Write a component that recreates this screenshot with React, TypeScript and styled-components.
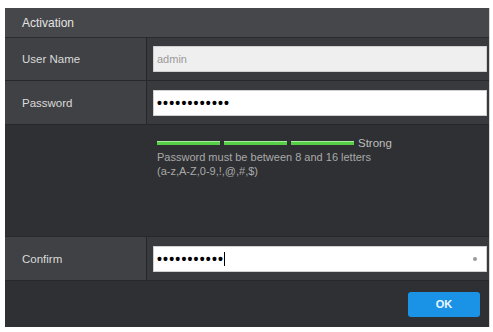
import React from "react";
import styled, { createGlobalStyle } from "styled-components";

const Global = createGlobalStyle`
  html, body { margin: 0; padding: 0; background: #ffffff; }
  body { font-family: "Liberation Sans", Arial, sans-serif; }
`;

const Dialog = styled.div`
  margin: 8px 0 0 5px;
  width: 484px;
  height: 319px;
  background: #2f3033;
  display: flex;
  flex-direction: column;
  box-shadow: 1px 0 0 #d6d6d6;
`;

const Header = styled.div`
  height: 29px;
  background: #46474a;
  border-bottom: 1px solid #2a2b2d;
  display: flex;
  align-items: center;
  padding-left: 17px;
  color: #e4e4e4;
  font-size: 12px;
`;

const Row = styled.div<{ $h: number }>`
  height: ${(p) => p.$h}px;
  display: flex;
  border-bottom: 1px solid #27282a;
  background: #393a3d;
`;

const Label = styled.div`
  width: 142px;
  border-right: 1px solid #262729;
  background: #404144;
  display: flex;
  align-items: center;
  padding-left: 17px;
  box-sizing: border-box;
  color: #dadada;
  font-size: 11.5px;
`;

const Cell = styled.div`
  flex: 1;
  display: flex;
  align-items: center;
  padding: 0 2px 0 6px;
`;

const Field = styled.div<{ $disabled?: boolean }>`
  position: relative;
  width: 334px;
  height: 26px;
  box-sizing: border-box;
  background: ${(p) => (p.$disabled ? "#efeff0" : "#ffffff")};
  border: 1px solid #d0d0d0;
  display: flex;
  align-items: center;
  padding-left: 3px;
  color: ${(p) => (p.$disabled ? "#9a9a9a" : "#111")};
  font-size: 11px;
`;

const Dots = styled.span`
  font-size: 14px;
  letter-spacing: 1.2px;
  color: #000;
  font-weight: bold;
`;

const Caret = styled.span`
  display: inline-block;
  width: 1px;
  height: 14px;
  background: #000;
`;

const Reveal = styled.span`
  position: absolute;
  right: 9px;
  top: 10px;
  width: 4px;
  height: 4px;
  border-radius: 50%;
  background: #9a9a9a;
`;

const Strength = styled.div`
  height: 112px;
  border-bottom: 1px solid #27282a;
  padding: 15px 0 0 152px;
  box-sizing: border-box;
`;

const Meter = styled.div`
  display: flex;
  align-items: center;
  gap: 4px;
  height: 6px;
`;

const Bar = styled.div`
  width: 63px;
  height: 3px;
  background: #56cf46;
  border-top: 1px solid #a8eea0;
`;

const MeterText = styled.span`
  color: #bdbdbd;
  font-size: 11.5px;
`;

const Hint = styled.div`
  margin-top: 4px;
  color: #a9a9a9;
  font-size: 11px;
  line-height: 14px;
`;

const Footer = styled.div`
  flex: 1;
  display: flex;
  justify-content: flex-end;
  align-items: center;
  padding-right: 9px;
`;

const OkButton = styled.button`
  width: 72px;
  height: 25px;
  border: none;
  border-radius: 3px;
  background: #1a93e6;
  color: #f0f8ff;
  font-family: "Liberation Sans", Arial, sans-serif;
  font-weight: bold;
  font-size: 11px;
  cursor: pointer;
`;

export default function App() {
  return (
    <>
      <Global />
      <Dialog>
        <Header>Activation</Header>
        <Row $h={42}>
          <Label>User Name</Label>
          <Cell>
            <Field $disabled>admin</Field>
          </Cell>
        </Row>
        <Row $h={43}>
          <Label>Password</Label>
          <Cell>
            <Field>
              <Dots>••••••••••••</Dots>
            </Field>
          </Cell>
        </Row>
        <Strength>
          <Meter>
            <Bar />
            <Bar />
            <Bar />
            <MeterText>Strong</MeterText>
          </Meter>
          <Hint>
            Password must be between 8 and 16 letters
            <br />
            (a-z,A-Z,0-9,!,@,#,$)
          </Hint>
        </Strength>
        <Row $h={43}>
          <Label>Confirm</Label>
          <Cell>
            <Field>
              <Dots>•••••••••••</Dots>
              <Caret />
              <Reveal />
            </Field>
          </Cell>
        </Row>
        <Footer>
          <OkButton>OK</OkButton>
        </Footer>
      </Dialog>
    </>
  );
}
